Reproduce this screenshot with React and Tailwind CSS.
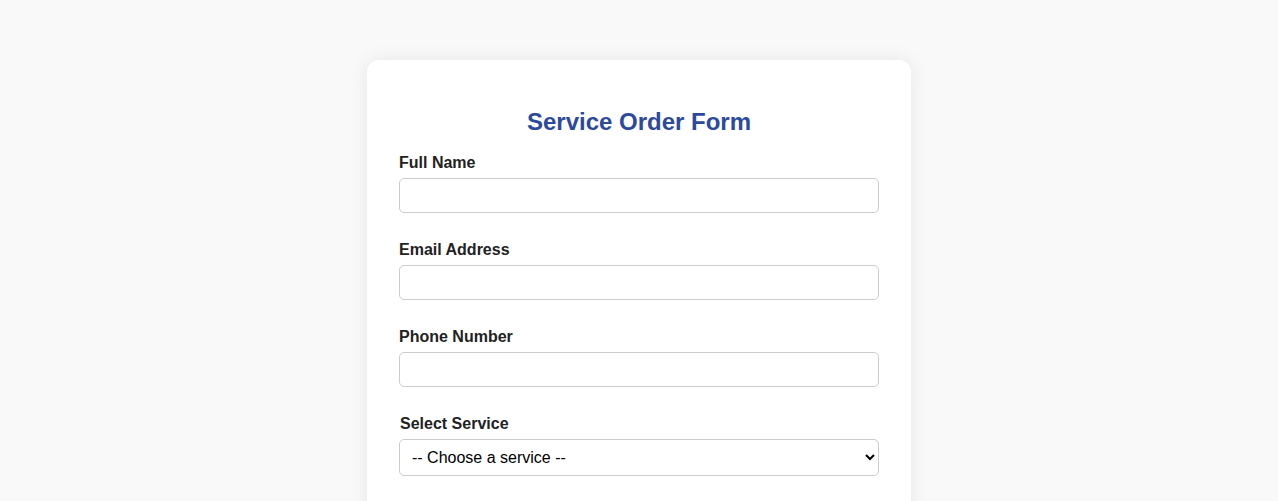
import React from 'react'

function Field({ label, type = 'text' }) {
  return (
    <div className="mb-[27px]">
      <label className="block mb-[5px] text-[16px] leading-[20px] font-bold text-[#222]">{label}</label>
      <input type={type} className="block w-full h-[35px] px-2 rounded-[5px] border border-[#ccc] bg-white text-[16px] outline-none" />
    </div>
  )
}

export default function App() {
  return (
    <div className="min-h-screen bg-[#f9f9f9] pt-[60px]" style={{ fontFamily: '"Liberation Sans", Arial, sans-serif' }}>
      <div className="mx-auto w-[544px] bg-white rounded-[12px] px-8 pt-[48px] pb-8 shadow-[0_0_20px_rgba(0,0,0,0.08)]">
        <h2 className="text-center text-[24px] leading-[28px] font-bold text-[#2c4a9c] mb-[17px]">Service Order Form</h2>
        <form>
          <Field label="Full Name" />
          <Field label="Email Address" type="email" />
          <Field label="Phone Number" type="tel" />
          <div className="mb-[27px]">
            <label className="block mb-[5px] pl-px text-[16px] leading-[20px] font-bold text-[#222]">Select Service</label>
            <select className="block w-full h-[37px] px-2 rounded-[5px] border border-[#ccc] bg-white text-[16px] text-black outline-none">
              <option>-- Choose a service --</option>
              <option>Cleaning</option>
              <option>Repair</option>
              <option>Installation</option>
            </select>
          </div>
        </form>
      </div>
    </div>
  )
}
